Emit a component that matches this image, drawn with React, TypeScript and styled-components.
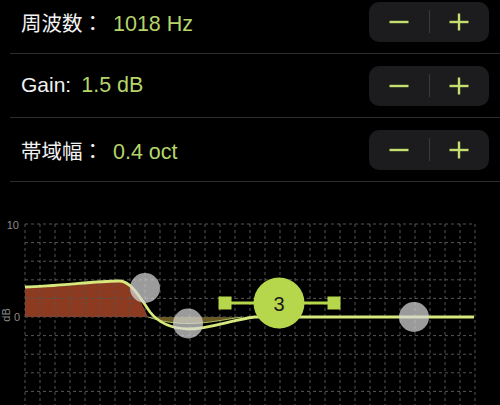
import React from "react";
import styled, { createGlobalStyle } from "styled-components";

const Global = createGlobalStyle`
  html, body { margin: 0; padding: 0; background: #000; }
  body { font-family: "Liberation Sans", "Noto Sans CJK JP", sans-serif; overflow: hidden; }
`;

const Page = styled.div`
  width: 500px;
  height: 405px;
  background: #000;
  overflow: hidden;
`;

const List = styled.div`
  margin-top: -10px;
  display: flex;
  flex-direction: column;
`;

const Row = styled.div`
  margin-left: 10px;
  height: 63px;
  padding: 0 11px 0 11px;
  display: flex;
  align-items: center;
  border-bottom: 1px solid #2c2c2e;
`;

const TextGroup = styled.div`
  flex: 1;
  display: flex;
  align-items: baseline;
`;

const Label = styled.span<{ $cjk?: boolean }>`
  color: #f2f2f2;
  font-size: ${(p) => (p.$cjk ? "20.5px" : "21px")};
  white-space: pre;
`;

const Value = styled.span`
  color: #b5d56a;
  font-size: 21.5px;
  margin-left: 10px;
`;

const Stepper = styled.div`
  width: 120px;
  height: 40px;
  border-radius: 10px;
  background: #1c1c1e;
  display: flex;
  align-items: center;
`;

const StepButton = styled.button`
  flex: 1;
  height: 100%;
  border: none;
  background: transparent;
  padding: 0;
  display: flex;
  align-items: center;
  justify-content: center;
  cursor: pointer;
`;

const StepDivider = styled.div`
  width: 1px;
  height: 23px;
  background: #3a3a3c;
`;

const Chart = styled.div`
  height: 223px;
  display: flex;
`;

const ICON = "#c5df6e";

const MinusIcon = () => (
  <svg width="20" height="20" viewBox="0 0 20 20">
    <line x1="0.5" y1="10" x2="19.5" y2="10" stroke={ICON} strokeWidth="2.4" />
  </svg>
);

const PlusIcon = () => (
  <svg width="20" height="20" viewBox="0 0 20 20">
    <line x1="0.5" y1="10" x2="19.5" y2="10" stroke={ICON} strokeWidth="2.4" />
    <line x1="10" y1="1.5" x2="10" y2="18.5" stroke={ICON} strokeWidth="2.4" />
  </svg>
);

const ParamRow = ({ label, value, cjk }: { label: string; value: string; cjk?: boolean }) => (
  <Row>
    <TextGroup>
      <Label $cjk={cjk}>{label}</Label>
      <Value>{value}</Value>
    </TextGroup>
    <Stepper>
      <StepButton aria-label="decrease">
        <MinusIcon />
      </StepButton>
      <StepDivider />
      <StepButton aria-label="increase">
        <PlusIcon />
      </StepButton>
    </Stepper>
  </Row>
);

const GX0 = 25;
const GX1 = 475;
const GY0 = 224;
const ROW = 18.6;
const COL = 15;

const EqChart = () => {
  const verticals = [];
  for (let i = 0; i <= 30; i++) verticals.push(GX0 + i * COL);
  const horizontals = [];
  for (let j = 0; j <= 10; j++) horizontals.push(GY0 + j * ROW);
  const green = "#b6d64b";
  return (
    <svg width="500" height="223" viewBox="0 182 500 223">
      <text x="19" y="229" fill="#8a8a8a" fontSize="11" textAnchor="end" fontFamily="Liberation Sans, sans-serif">10</text>
      <text x="20" y="321" fill="#8a8a8a" fontSize="11" textAnchor="end" fontFamily="Liberation Sans, sans-serif">0</text>
      <text x="0" y="0" fill="#8a8a8a" fontSize="11" textAnchor="middle" fontFamily="Liberation Sans, sans-serif" transform="translate(10 315) rotate(-90)">dB</text>

      <path
        d="M25 317 L25 288 C60 287 100 282 120 282 C134 283 140 300 148 317 Z"
        fill="#8c3a20"
      />
      <path
        d="M148 317 C163 322 175 323.5 190 323.5 C206 323.5 222 320 242 317 Z"
        fill="#6a5a22"
      />

      <g stroke="#555" strokeWidth="1" strokeDasharray="3 3">
        {verticals.map((x) => (
          <line key={"v" + x} x1={x} y1={GY0} x2={x} y2={412} />
        ))}
        {horizontals.map((y) => (
          <line key={"h" + y} x1={GX0} y1={y} x2={GX1} y2={y} />
        ))}
      </g>

      <path
        d="M148 317 C163 322 175 323.5 190 323.5 C206 323.5 222 320 242 317"
        fill="none"
        stroke="#a8c060"
        strokeWidth="1"
      />
      <path
        d="M25 287 C60 286 100 280.5 120 281 C132 282 140 298 150 312 C158 322 170 328.5 188 329 C210 329 230 320 255 317 L474 317"
        fill="none"
        stroke="#d8e87c"
        strokeWidth="2.8"
      />

      <circle cx="145" cy="288" r="15" fill="rgba(215,215,215,0.72)" />
      <circle cx="188" cy="323.5" r="15" fill="rgba(215,215,215,0.72)" />
      <circle cx="414" cy="317" r="15" fill="rgba(215,215,215,0.72)" />

      <line x1="225" y1="303" x2="334" y2="303" stroke={green} strokeWidth="3" />
      <rect x="218.5" y="296.5" width="13" height="13" fill={green} />
      <rect x="327.5" y="296.5" width="13" height="13" fill={green} />
      <circle cx="279" cy="303" r="25.5" fill={green} />
      <text x="279" y="310.5" fill="#1a1a1a" fontSize="20" textAnchor="middle" fontFamily="Liberation Sans, sans-serif">3</text>
    </svg>
  );
};

export default function App() {
  return (
    <Page>
      <Global />
      <List>
        <ParamRow label="周波数：" value="1018 Hz" cjk />
        <ParamRow label="Gain:" value="1.5 dB" />
        <ParamRow label="帯域幅：" value="0.4 oct" cjk />
      </List>
      <Chart>
        <EqChart />
      </Chart>
    </Page>
  );
}
